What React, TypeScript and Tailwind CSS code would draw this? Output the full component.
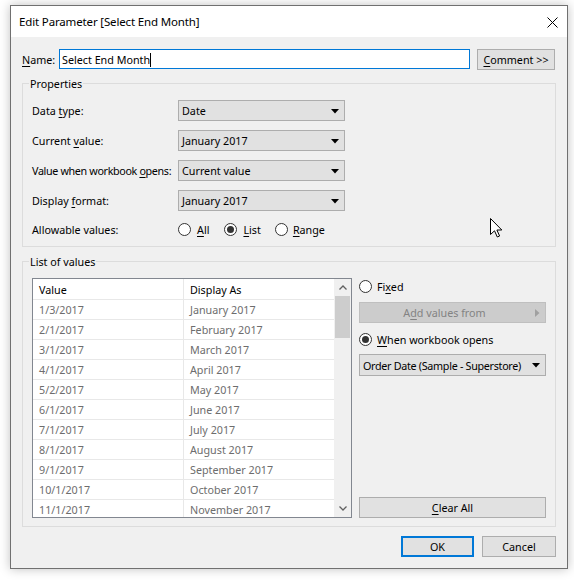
import { FC, ReactNode } from "react";

const Key: FC<{ children: ReactNode }> = ({ children }) => (
  <span className="underline underline-offset-[2px] decoration-1">{children}</span>
);

const Arrow = () => (
  <svg width="8" height="5" viewBox="0 0 8 5">
    <polygon points="0,0 8,0 4,4.5" fill="#000" />
  </svg>
);

type dropProps = {
  value: string,
  className: string,
}

const Dropdown: FC<dropProps> = ({ value, className }) => (
  <div className={`flex items-center justify-between pl-[3px] pr-[5px] pt-[1px] bg-[#e1e1e1] border border-[#adadad] ${className}`}>
    <span className="whitespace-nowrap">{value}</span>
    <Arrow />
  </div>
);

const Radio: FC<{ checked?: boolean }> = ({ checked }) => (
  <span className="w-[13px] h-[13px] rounded-full border border-[#333] bg-white flex items-center justify-center shrink-0">
    {checked && <span className="w-[7px] h-[7px] rounded-full bg-[#333]" />}
  </span>
);

const Chevron: FC<{ down?: boolean }> = ({ down }) => (
  <svg width="8" height="5" viewBox="0 0 8 5">
    <polyline
      points={down ? "0.5,0.5 4,4 7.5,0.5" : "0.5,4.5 4,1 7.5,4.5"}
      fill="none"
      stroke="#606060"
      strokeWidth="1.3"
    />
  </svg>
);

const values = [
  ["1/3/2017", "January 2017"],
  ["2/1/2017", "February 2017"],
  ["3/1/2017", "March 2017"],
  ["4/1/2017", "April 2017"],
  ["5/2/2017", "May 2017"],
  ["6/1/2017", "June 2017"],
  ["7/1/2017", "July 2017"],
  ["8/1/2017", "August 2017"],
  ["9/1/2017", "September 2017"],
  ["10/1/2017", "October 2017"],
  ["11/1/2017", "November 2017"],
];

const App = () => {
  return (
    <div className="relative w-[574px] h-[580px] bg-white pt-[5px] pl-[10px] font-['Segoe_UI','Noto_Sans',sans-serif] text-[10.75px] leading-[16px] text-black">
      <div className="w-[558px] h-[564px] flex flex-col border border-[#707070] bg-[#f0f0f0] shadow-[0_0_10px_rgba(0,0,0,0.25)]">
        {/* title bar */}
        <div className="h-[31px] shrink-0 bg-white flex items-center justify-between pl-[8px] pr-[9px] pt-[1px]">
          <span className="text-[11.5px] tracking-[-0.15px]">Edit Parameter [Select End Month]</span>
          <svg width="11" height="11" viewBox="0 0 11 11">
            <path d="M0.5 0.5 L10.5 10.5 M10.5 0.5 L0.5 10.5" stroke="#000" strokeWidth="1" />
          </svg>
        </div>

        <div className="flex-1 flex flex-col pt-[12px] pl-[11px]">
          {/* name row */}
          <div className="flex items-start">
            <span className="w-[37px] h-[21px] flex items-center pt-[1px]"><Key>N</Key>ame:</span>
            <div className="w-[411px] h-[20px] border border-[#0078d7] bg-white flex items-center pl-[2px] pt-[1px]">
              <span>Select End Month</span>
              <span className="w-px h-[14px] bg-black" />
            </div>
            <button className="ml-[7px] w-[78px] h-[21px] bg-[#e1e1e1] border border-[#adadad] flex items-center justify-center pt-[1px]">
              <span><Key>C</Key>omment &gt;&gt;</span>
            </button>
          </div>

          {/* properties */}
          <fieldset className="mt-[5px] w-[534px] border border-[#dcdcdc] pb-[7px]">
            <legend className="ml-[6px] px-[1px] pt-[1px]">Properties</legend>
            <div className="pt-[8px] pl-[9px] flex flex-col gap-[9px]">
              <div className="flex items-center h-[21px]">
                <span className="w-[146px]">Data <Key>t</Key>ype:</span>
                <Dropdown value="Date" className="w-[167px] h-[21px]" />
              </div>
              <div className="flex items-center h-[21px]">
                <span className="w-[146px]">Current <Key>v</Key>alue:</span>
                <Dropdown value="January 2017" className="w-[167px] h-[21px]" />
              </div>
              <div className="flex items-center h-[21px]">
                <span className="w-[146px] whitespace-nowrap tracking-[-0.35px]">Value when workbook <Key>o</Key>pens:</span>
                <Dropdown value="Current value" className="w-[167px] h-[21px]" />
              </div>
              <div className="flex items-center h-[21px]">
                <span className="w-[146px]">Display <Key>f</Key>ormat:</span>
                <Dropdown value="January 2017" className="w-[167px] h-[21px]" />
              </div>
              <div className="flex items-center h-[19px]">
                <span className="w-[146px]">Allowable values:</span>
                <span className="flex items-center gap-[6px]"><Radio /><span><Key>A</Key>ll</span></span>
                <span className="ml-[15px] flex items-center gap-[6px]"><Radio checked /><span><Key>L</Key>ist</span></span>
                <span className="ml-[14px] flex items-center gap-[5px]"><Radio /><span><Key>R</Key>ange</span></span>
              </div>
            </div>
          </fieldset>

          {/* list of values */}
          <fieldset className="mt-[6px] w-[534px] border border-[#dcdcdc] pb-[8px]">
            <legend className="ml-[6px] px-[1px] pt-[1px]">List of values</legend>
            <div className="pt-[8px] pl-[9px] flex gap-[7px]">
              <div className="w-[320px] h-[240px] border border-[#828790] bg-white flex overflow-hidden">
                <div className="flex-1 flex flex-col overflow-hidden">
                  <div className="h-[21px] shrink-0 flex border-b border-[#e8e8e8]">
                    <span className="w-[151px] pl-[6px] pt-[2px] flex items-center border-r border-[#e8e8e8]">Value</span>
                    <span className="flex-1 pl-[6px] pt-[2px] flex items-center">Display As</span>
                  </div>
                  {values.map(([v, d]) => (
                    <div key={v} className="h-[20px] shrink-0 flex border-b border-[#e8e8e8] text-[#6d6d6d]">
                      <span className="w-[151px] pl-[6px] pt-[1px] flex items-center border-r border-[#e8e8e8]">{v}</span>
                      <span className="flex-1 pl-[6px] pt-[1px] flex items-center">{d}</span>
                    </div>
                  ))}
                </div>
                <div className="w-[17px] shrink-0 bg-[#f0f0f0] flex flex-col">
                  <div className="h-[17px] flex items-center justify-center"><Chevron /></div>
                  <div className="h-[42px] mx-[1px] bg-[#cdcdcd]" />
                  <div className="flex-1" />
                  <div className="h-[17px] flex items-center justify-center"><Chevron down /></div>
                </div>
              </div>

              <div className="w-[187px] flex flex-col">
                <div className="h-[17px] flex items-center gap-[5px]">
                  <Radio />
                  <span>Fi<Key>x</Key>ed</span>
                </div>
                <div className="mt-[7px] h-[21px] bg-[#cccccc] border border-[#bfbfbf] text-[#838383] flex items-center pt-[1px]">
                  <span className="flex-1 text-center">A<Key>d</Key>d values from</span>
                  <span className="w-[16px] flex items-center justify-center">
                    <svg width="5" height="8" viewBox="0 0 5 8">
                      <polygon points="0,0 4.5,4 0,8" fill="#a0a0a0" />
                    </svg>
                  </span>
                </div>
                <div className="mt-[8px] h-[17px] flex items-center gap-[5px]">
                  <Radio checked />
                  <span><Key>W</Key>hen workbook opens</span>
                </div>
                <Dropdown value="Order Date (Sample - Superstore)" className="mt-[6px] w-[187px] h-[22px] tracking-[-0.3px]" />
                <button className="mt-auto h-[21px] bg-[#e1e1e1] border border-[#adadad] flex items-center justify-center pt-[1px]">
                  <span><Key>C</Key>lear All</span>
                </button>
              </div>
            </div>
          </fieldset>

          {/* footer buttons */}
          <div className="mt-[9px] w-[534px] flex justify-end gap-[8px]">
            <button className="w-[73px] h-[21px] bg-[#e1e1e1] border-2 border-[#0078d7] flex items-center justify-center pt-[1px]">OK</button>
            <button className="w-[74px] h-[21px] bg-[#e1e1e1] border border-[#adadad] flex items-center justify-center pt-[1px]">Cancel</button>
          </div>
        </div>
      </div>

      {/* mouse pointer */}
      <svg className="absolute left-[490px] top-[218px]" width="13" height="20" viewBox="0 0 13 20">
        <path d="M0.5 0.5 L0.5 16.5 L4.5 12.8 L7.3 19 L9.6 18 L6.9 12 L11.8 12 Z" fill="#fff" stroke="#000" strokeWidth="1" strokeLinejoin="round" />
      </svg>
    </div>
  );
};

export default App;
